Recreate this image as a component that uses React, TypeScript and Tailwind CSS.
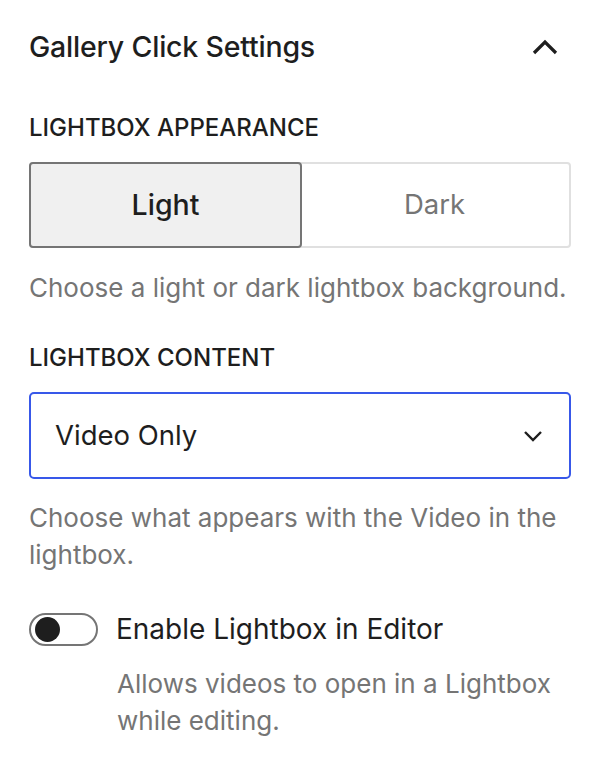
// gallery click settings panel
// lightbox appearance, content select and editor toggle

const font = { fontFamily: "Inter, 'Noto Sans', sans-serif" };

const ChevronUp = () => (
  <svg width="28" height="16" viewBox="0 0 28 16" fill="none">
    <path d="M3 14L14 3l11 11" stroke="#1e1e1e" strokeWidth="3.2" />
  </svg>
);

const ChevronDown = () => (
  <svg width="20" height="12" viewBox="0 0 20 12" fill="none">
    <path d="M2 2l8 8 8-8" stroke="#1e1e1e" strokeWidth="2.4" />
  </svg>
);

export default function App() {
  return (
    <div
      className="w-[600px] h-[772px] bg-white text-[#1e1e1e] px-[29px] pt-[28px]"
      style={font}
    >
      {/* panel header */}
      <div className="flex items-center justify-between h-[38px]">
        <h2 className="text-[28.5px] font-medium tracking-[-0.2px]">
          Gallery Click Settings
        </h2>
        <div className="mr-[12px]">
          <ChevronUp />
        </div>
      </div>

      {/* lightbox appearance */}
      <div className="mt-[46px] text-[24px] font-medium uppercase leading-[32px]">
        Lightbox Appearance
      </div>
      <div className="mt-[18px] flex h-[86px] rounded-[4px] border-2 border-[#e0e0e0]">
        <div className="-m-[2px] flex flex-1 items-center justify-center rounded-[4px] border-2 border-[#757575] bg-[#f0f0f0] text-[28.5px] font-medium">
          Light
        </div>
        <div className="flex flex-1 items-center justify-center text-[27.5px] text-[#757575]">
          Dark
        </div>
      </div>
      <p className="mt-[21px] text-[26px] leading-[37px] text-[#757575]">
        Choose a light or dark lightbox background.
      </p>

      {/* lightbox content */}
      <div className="mt-[36px] text-[24px] font-medium uppercase leading-[32px]">
        Lightbox Content
      </div>
      <div className="mt-[18px] flex h-[87px] items-center justify-between rounded-[5px] border-2 border-[#3858e9] pl-[24px] pr-[26px]">
        <span className="text-[27.5px]">Video Only</span>
        <ChevronDown />
      </div>
      <p className="mt-[20px] text-[26px] leading-[37px] text-[#757575]">
        Choose what appears with the Video in the lightbox.
      </p>

      {/* editor toggle */}
      <div className="mt-[38px] flex items-center gap-[18px]">
        <div className="flex h-[33px] w-[69px] items-center rounded-full border-2 border-[#757575] px-[4px]">
          <div className="h-[25px] w-[25px] rounded-full bg-[#1e1e1e]" />
        </div>
        <span className="text-[28px] leading-[36px]">
          Enable Lightbox in Editor
        </span>
      </div>
      <p className="mt-[18px] pl-[88px] text-[26px] leading-[37px] text-[#757575]">
        Allows videos to open in a Lightbox while editing.
      </p>
    </div>
  );
}
